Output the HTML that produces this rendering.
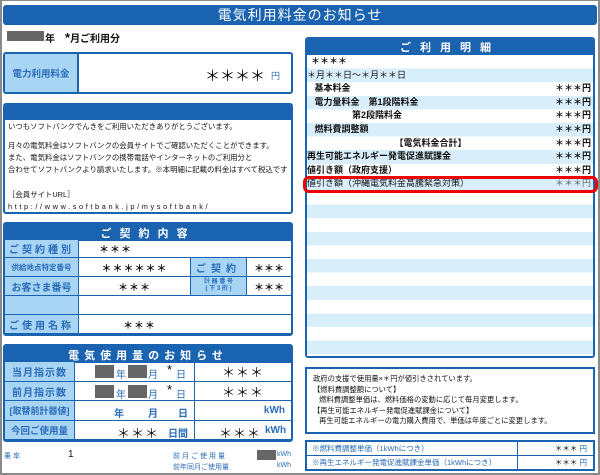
<!DOCTYPE html>
<html><head><meta charset="utf-8"><style>
*{margin:0;padding:0;box-sizing:border-box}
body{width:600px;height:475px;background:#fff;position:relative;overflow:hidden;font-family:"Liberation Sans","Noto Sans CJK JP",sans-serif;color:#111}
.a{position:absolute}
.frame{left:0;top:0;width:600px;height:475px;border:2px solid #8a8a8a;border-top-width:1px}
.bl{background:#1a63b0;color:#fff}
.lb{background:#a9d5f5;color:#2a6cb8;font-weight:bold}
.box{border:2px solid #1a63b0;border-radius:3px}
.c{display:flex;align-items:center;justify-content:center}
.cell{position:absolute;border:1px solid #1a63b0;display:flex;align-items:center;font-size:10px}
.m{position:absolute;left:8px;font-size:7.4px;white-space:pre;line-height:9px}
.row{position:absolute;left:307px;width:286px;height:13.6px;font-size:9px;font-weight:bold;line-height:13.6px;white-space:pre}
.row .r{position:absolute;right:2px;top:0}
.gray{background:#666;display:inline-block}
.big{font-size:13px;letter-spacing:1px}
</style></head><body>
<div class="a frame"></div>
<div class="a bl c" style="left:3px;top:5px;width:594px;height:20px;border-radius:3px;font-size:14px;letter-spacing:1px">電気利用料金のお知らせ</div>

<div class="a" style="left:7px;top:31px;width:37px;height:10px;background:#666"></div>
<div class="a" style="left:45px;top:30px;font-size:10px;font-weight:bold">年　<span style="font-size:13px">*</span>月ご利用分</div>

<div class="a box" style="left:3px;top:52px;width:290px;height:42px;overflow:hidden">
 <div class="a lb c" style="left:0;top:0;width:74px;height:38px;border-right:2px solid #1a63b0;font-size:9.5px">電力利用料金</div>
 <div class="a" style="left:200px;top:11px;font-size:15px;white-space:nowrap">＊＊＊＊</div>
 <div class="a" style="left:266px;top:15px;font-size:9px;color:#2a6cb8">円</div>
</div>

<div class="a box" style="left:3px;top:103px;width:290px;height:111px;overflow:hidden">
 <div class="a bl" style="left:0;top:0;width:286px;height:15px"></div>
</div>
<div class="m" style="top:122px">いつもソフトバンクでんきをご利用いただきありがとうございます。</div>
<div class="m" style="top:141px">月々の電気料金はソフトバンクの会員サイトでご確認いただくことができます。</div>
<div class="m" style="top:153px">また、電気料金はソフトバンクの携帯電話やインターネットのご利用分と</div>
<div class="m" style="top:165px">合わせてソフトバンクより請求いたします。※本明細に記載の料金はすべて税込です</div>
<div class="m" style="top:190px">［会員サイトURL］</div>
<div class="m" style="top:202px;letter-spacing:2.6px">http://www.softbank.jp/mysoftbank/</div>

<div class="a box" style="left:3px;top:222px;width:290px;height:114px;overflow:hidden">
 <div class="a bl c" style="left:0;top:0;width:286px;height:17px;font-size:11px;letter-spacing:8px;font-weight:bold">ご契約内容</div>
</div>
<div class="cell lb c" style="left:4px;top:239px;width:75px;height:19px;letter-spacing:3px">ご契約種別</div>
<div class="cell" style="left:78px;top:239px;width:214px;height:19px;padding-left:20px;font-weight:bold;letter-spacing:1px">＊＊＊</div>
<div class="cell lb c" style="left:4px;top:257px;width:75px;height:20px;font-size:7.5px">供給地点特定番号</div>
<div class="cell c" style="left:78px;top:257px;width:113px;height:20px;font-weight:bold;letter-spacing:1px">＊＊＊＊＊＊</div>
<div class="cell lb c" style="left:190px;top:257px;width:57px;height:20px;letter-spacing:5px">ご契約</div>
<div class="cell c" style="left:246px;top:257px;width:46px;height:20px;font-weight:bold">＊＊＊</div>
<div class="cell lb c" style="left:4px;top:276px;width:75px;height:20px">お客さま番号</div>
<div class="cell c" style="left:78px;top:276px;width:113px;height:20px;font-weight:bold;letter-spacing:1px">＊＊＊</div>
<div class="cell lb c" style="left:190px;top:276px;width:57px;height:20px;font-size:6px;line-height:7px;text-align:center">計 器 番 号<br>( 下 3 桁 )</div>
<div class="cell c" style="left:246px;top:276px;width:46px;height:20px;font-weight:bold">＊＊＊</div>
<div class="cell lb" style="left:4px;top:295px;width:75px;height:20px"></div>
<div class="cell" style="left:78px;top:295px;width:214px;height:20px"></div>
<div class="cell lb c" style="left:4px;top:314px;width:75px;height:20px;letter-spacing:3px">ご使用名称</div>
<div class="cell" style="left:78px;top:314px;width:214px;height:20px;padding-left:44px;font-weight:bold;letter-spacing:1px">＊＊＊</div>

<div class="a box" style="left:3px;top:344px;width:290px;height:98px;overflow:hidden">
 <div class="a bl c" style="left:0;top:0;width:286px;height:17px;font-size:11px;letter-spacing:5px;font-weight:bold">電気使用量のお知らせ</div>
</div>
<div class="cell lb c" style="left:4px;top:361px;width:71px;height:21px;letter-spacing:1px">当月指示数</div>
<div class="cell" style="left:74px;top:361px;width:121px;height:21px;color:#2a6cb8"><span class="gray" style="position:absolute;left:20px;top:3px;width:19px;height:13px"></span><span class="a" style="left:41px;top:4px">年</span><span class="gray" style="position:absolute;left:53px;top:3px;width:19px;height:13px"></span><span class="a" style="left:73px;top:4px">月</span><span class="a" style="left:92px;top:0px;color:#000;font-size:13px">*</span><span class="a" style="left:101px;top:4px">日</span></div>
<div class="cell c big" style="left:194px;top:361px;width:98px;height:21px">＊＊＊</div>
<div class="cell lb c" style="left:4px;top:381px;width:71px;height:20px;letter-spacing:1px">前月指示数</div>
<div class="cell" style="left:74px;top:381px;width:121px;height:20px;color:#2a6cb8"><span class="gray" style="position:absolute;left:20px;top:3px;width:19px;height:13px"></span><span class="a" style="left:41px;top:4px">年</span><span class="gray" style="position:absolute;left:53px;top:3px;width:19px;height:13px"></span><span class="a" style="left:73px;top:4px">月</span><span class="a" style="left:92px;top:0px;color:#000;font-size:13px">*</span><span class="a" style="left:101px;top:4px">日</span></div>
<div class="cell c big" style="left:194px;top:381px;width:98px;height:20px">＊＊＊</div>
<div class="cell lb c" style="left:4px;top:400px;width:71px;height:21px;font-size:9px">[取替前計器値]</div>
<div class="cell" style="left:74px;top:400px;width:121px;height:21px;color:#2a6cb8;font-weight:bold"><span class="a" style="left:39px;top:4px">年</span><span class="a" style="left:73px;top:4px">月</span><span class="a" style="left:103px;top:4px">日</span></div>
<div class="cell" style="left:194px;top:400px;width:98px;height:21px;color:#2a6cb8;font-weight:bold;justify-content:flex-end;padding-right:6px">kWh</div>
<div class="cell lb c" style="left:4px;top:420px;width:71px;height:20px;font-size:9.5px">今回ご使用量</div>
<div class="cell" style="left:74px;top:420px;width:121px;height:20px"><span class="a big" style="left:42px;top:2px">＊＊＊</span><span class="a" style="left:93px;top:4px;color:#2a6cb8;font-weight:bold">日間</span></div>
<div class="cell" style="left:194px;top:420px;width:98px;height:20px"><span class="a big" style="left:24px;top:2px">＊＊＊</span><span class="a" style="left:70px;top:4px;color:#2a6cb8;font-weight:bold">kWh</span></div>

<div class="a" style="left:4px;top:451px;font-size:7px;color:#2a6cb8;letter-spacing:2px">乗率</div>
<div class="a" style="left:68px;top:449px;font-size:10px">1</div>
<div class="a" style="left:173px;top:451px;font-size:7px;color:#2a6cb8;letter-spacing:2px">前月ご使用量</div>
<div class="a" style="left:257px;top:450px;width:19px;height:10px;background:#666"></div>
<div class="a" style="left:277px;top:451px;font-size:7px;color:#2a6cb8">kWh</div>
<div class="a" style="left:173px;top:462px;font-size:7px;color:#2a6cb8">前年同月ご使用量</div>
<div class="a" style="left:277px;top:462px;font-size:7px;color:#2a6cb8">kWh</div>

<div class="a box" style="left:305px;top:37px;width:290px;height:321px;overflow:hidden">
 <div class="a bl c" style="left:0;top:0;width:286px;height:16px;font-size:11px;letter-spacing:9px;font-weight:bold">ご利用明細</div>
 <div class="a" style="left:0;top:16px;width:286px;height:301px;background:repeating-linear-gradient(#fff 0,#fff 13.6px,#d9eefb 13.6px,#d9eefb 27.2px)"></div>
</div>
<div class="row" style="top:55px;padding-left:4px">＊＊＊＊</div>
<div class="row" style="top:68.6px;font-weight:normal">＊月＊＊日～＊月＊＊日</div>
<div class="row" style="top:82.2px">   基本料金<span class="r">＊＊＊円</span></div>
<div class="row" style="top:95.8px">   電力量料金　第1段階料金<span class="r">＊＊＊円</span></div>
<div class="row" style="top:109.4px">                  第2段階料金<span class="r">＊＊＊円</span></div>
<div class="row" style="top:123px">   燃料費調整額<span class="r">＊＊＊円</span></div>
<div class="row" style="top:136.6px">                                   【電気料金合計】<span class="r">＊＊＊円</span></div>
<div class="row" style="top:150.2px">再生可能エネルギー発電促進賦課金<span class="r">＊＊＊円</span></div>
<div class="row" style="top:163.8px">値引き額（政府支援）<span class="r">＊＊＊円</span></div>
<div class="row" style="top:177.4px;font-weight:normal">値引き額（沖縄電気料金高騰緊急対策）<span class="r" style="color:#666">＊＊＊円</span></div>
<div class="a" style="left:303px;top:176px;width:295px;height:17px;border:3px solid #e00;border-radius:6px"></div>

<div class="a" style="left:305px;top:367px;width:290px;height:67px;border:2px solid #1a63b0;font-size:7.3px;line-height:10.6px;padding:5px 0 0 6px;white-space:pre">政府の支援で使用量×＊円が値引きされています。
【燃料費調整額について】
   燃料費調整単価は、燃料価格の変動に応じて毎月変更します。
【再生可能エネルギー発電促進賦課金について】
   再生可能エネルギーの電力購入費用で、単価は年度ごとに変更します。</div>

<div class="cell" style="left:305px;top:440px;width:213px;height:16px;color:#2a6cb8;font-size:7.5px;padding-left:5px;border-width:2px 1px 1px 2px">※燃料費調整単価（1kWhにつき）</div>
<div class="cell" style="left:517px;top:440px;width:78px;height:16px;justify-content:flex-end;padding-right:6px;font-size:7.5px;border-width:2px 2px 1px 1px">＊＊＊ <span style="color:#2a6cb8">&nbsp;円</span></div>
<div class="cell" style="left:305px;top:455px;width:213px;height:16px;color:#2a6cb8;font-size:7.5px;padding-left:5px;border-width:1px 1px 2px 2px">※再生エネルギー発電促進賦課金単価（1kWhにつき）</div>
<div class="cell" style="left:517px;top:455px;width:78px;height:16px;justify-content:flex-end;padding-right:6px;font-size:7.5px;border-width:1px 2px 2px 1px">＊＊＊ <span style="color:#2a6cb8">&nbsp;円</span></div>
</body></html>
